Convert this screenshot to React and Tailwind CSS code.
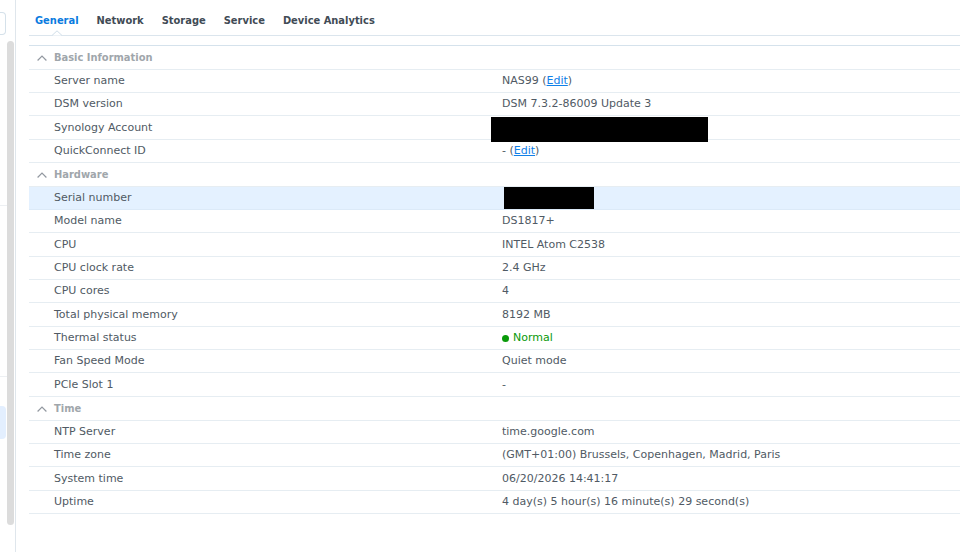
import React, { useState } from "react";

const tabs = ["General", "Network", "Storage", "Service", "Device Analytics"];

const EditLink = () => (
    <a href="#edit" className="text-[#1080e8] underline">Edit</a>
);

const sections = [
    {
        title: "Basic Information",
        rows: [
            { label: "Server name", value: <>NAS99 (<EditLink />)</> },
            { label: "DSM version", value: "DSM 7.3.2-86009 Update 3" },
            {
                label: "Synology Account",
                value: <span className="absolute -left-[11px] top-px h-[25px] w-[217px] bg-black" />
            },
            { label: "QuickConnect ID", value: <>- (<EditLink />)</> }
        ]
    },
    {
        title: "Hardware",
        rows: [
            {
                label: "Serial number",
                selected: true,
                value: <span className="absolute left-[2px] top-0 h-full w-[90px] bg-black" />
            },
            { label: "Model name", value: "DS1817+" },
            { label: "CPU", value: "INTEL Atom C2538" },
            { label: "CPU clock rate", value: "2.4 GHz" },
            { label: "CPU cores", value: "4" },
            { label: "Total physical memory", value: "8192 MB" },
            {
                label: "Thermal status",
                value: (
                    <span className="flex items-center gap-1 text-[#0a9a0a]">
                        <span className="size-[7px] rounded-full bg-[#0a9a0a]" />
                        Normal
                    </span>
                )
            },
            { label: "Fan Speed Mode", value: "Quiet mode" },
            { label: "PCIe Slot 1", value: "-" }
        ]
    },
    {
        title: "Time",
        rows: [
            { label: "NTP Server", value: "time.google.com" },
            { label: "Time zone", value: "(GMT+01:00) Brussels, Copenhagen, Madrid, Paris" },
            { label: "System time", value: "06/20/2026 14:41:17" },
            { label: "Uptime", value: "4 day(s) 5 hour(s) 16 minute(s) 29 second(s)" }
        ]
    }
];

const Sidebar = () => (
    <aside className="flex w-4 shrink-0 border-r border-[#dfe6ec]">
        <div className="flex w-[7px] flex-col pt-3">
            <div className="h-[23px] w-[6px] rounded-r border border-l-0 border-[#d5e1ea]" />
            <div className="mt-[170px] border-t border-[#edf0f3]" />
            <div className="mt-[170px] border-t border-[#edf0f3]" />
            <div className="mt-[29px] h-[33px] w-[6px] rounded-r bg-[#e3efff]" />
        </div>
        <div className="mt-[41px] h-[484px] w-[7px] rounded-full bg-[#dcdcdc]" />
    </aside>
);

const Section = ({ section }) => {
    const [open, setOpen] = useState(true);

    return (
        <tbody>
            <tr className="h-[23px] border-b border-[#e6edf2] nth-[3n+1]:h-6">
                <th colSpan={2} className="p-0 text-left">
                    <button
                        type="button"
                        aria-expanded={open}
                        onClick={() => setOpen(!open)}
                        className="flex items-center gap-[7px] pl-2 font-['DejaVu_Sans_Condensed','DejaVu_Sans',sans-serif] font-bold text-[#a0a6ab]"
                    >
                        <svg
                            viewBox="0 0 10 6"
                            className={open ? "h-[6px] w-[10px]" : "h-[6px] w-[10px] rotate-180"}
                            fill="none"
                            stroke="#9298a0"
                            strokeWidth="1.2"
                        >
                            <path d="M.6 5.5 5 1l4.4 4.5" />
                        </svg>
                        {section.title}
                    </button>
                </th>
            </tr>
            {open && section.rows.map((row) => (
                <tr
                    key={row.label}
                    className={
                        row.selected
                            ? "h-[23px] border-b border-[#dceaf8] bg-[#e4f1ff] nth-[3n+1]:h-6"
                            : "h-[23px] border-b border-[#e6edf2] nth-[3n+1]:h-6"
                    }
                >
                    <th scope="row" className="w-[473px] p-0 pl-[25px] text-left font-normal">{row.label}</th>
                    <td className="relative p-0">{row.value}</td>
                </tr>
            ))}
        </tbody>
    );
};

const App = () => {
    const [active, setActive] = useState("General");

    return (
        <div className="flex min-h-screen bg-white font-['DejaVu_Sans',sans-serif] text-[11px] leading-4 text-[#505a64]">
            <Sidebar />
            <main className="min-w-0 flex-1 pl-[13px]">
                <nav className="flex h-9 items-end gap-[18px] border-b border-[#dbe5ed] pl-[6px] font-['DejaVu_Sans_Condensed','DejaVu_Sans',sans-serif]">
                    {tabs.map((tab) => (
                        <button
                            key={tab}
                            type="button"
                            onClick={() => setActive(tab)}
                            className={
                                tab === active
                                    ? "relative pb-[6px] font-bold text-[#0a7be0]"
                                    : "relative pb-[6px] font-bold text-[#414b55]"
                            }
                        >
                            {tab}
                            {tab === active && (
                                <svg
                                    viewBox="0 0 10 6"
                                    className="absolute -bottom-px left-1/2 h-[6px] w-[10px] -translate-x-1/2"
                                    fill="#fff"
                                    stroke="#cfdde8"
                                >
                                    <path d="M0 5.5 5 .8l5 4.7" />
                                </svg>
                            )}
                        </button>
                    ))}
                </nav>
                <div className="pt-[9px]">
                    <table className="w-full border-collapse border-t border-[#d5e2ec]">
                        {sections.map((section) => (
                            <Section key={section.title} section={section} />
                        ))}
                    </table>
                </div>
            </main>
        </div>
    );
};

export default App;
